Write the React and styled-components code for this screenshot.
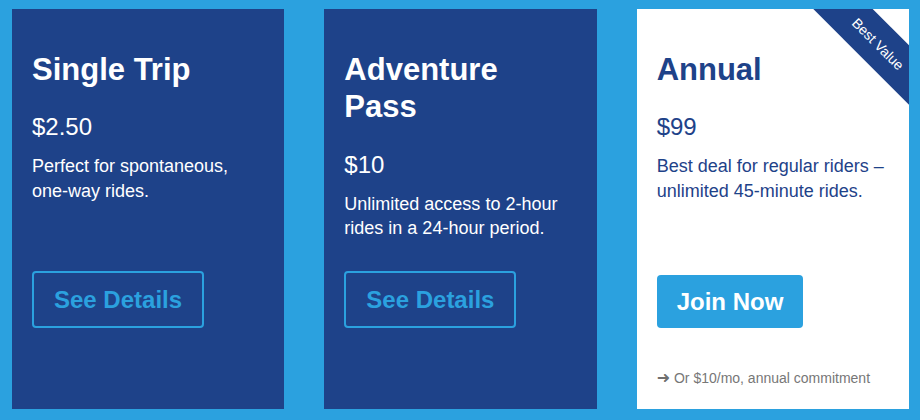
import React from "react";
import styled, { createGlobalStyle, css } from "styled-components";

const NAVY = "#1e4289";
const SKY = "#2ba1df";

const GlobalStyle = createGlobalStyle`
  html, body {
    margin: 0;
    padding: 0;
    background: ${SKY};
  }
  body {
    font-family: "Liberation Sans", Arial, sans-serif;
  }
`;

const Page = styled.div`
  display: grid;
  grid-template-columns: repeat(3, 1fr);
  gap: 40px;
  padding: 9px 11px 11px 12px;
  box-sizing: border-box;
  width: 920px;
  height: 420px;
`;

const Card = styled.article`
  position: relative;
  overflow: hidden;
  display: flex;
  flex-direction: column;
  box-sizing: border-box;
  height: 400px;
  padding: 20px;
  background: ${(p) => (p.$featured ? "#ffffff" : NAVY)};
  color: ${(p) => (p.$featured ? NAVY : "#ffffff")};
`;

const Title = styled.h2`
  margin: 22px 0 0;
  font-size: 31px;
  line-height: 37.4px;
  font-weight: 700;
`;

const Price = styled.p`
  margin: 25px 0 0;
  font-size: 24px;
  line-height: 28.8px;
`;

const Description = styled.p`
  margin: 12px 0 0;
  font-size: 18px;
  line-height: 24.3px;
`;

const Spacer = styled.div`
  flex: 1;
`;

const ActionButton = styled.button`
  align-self: flex-start;
  font-family: inherit;
  font-size: 24px;
  font-weight: 700;
  line-height: 29px;
  padding: 12px 20px;
  border-radius: 4px;
  cursor: pointer;
  ${(p) =>
    p.$variant === "solid"
      ? css`
          background: ${SKY};
          color: #ffffff;
          border: 0;
        `
      : css`
          background: transparent;
          color: ${SKY};
          border: 2px solid ${SKY};
        `}
`;

const Footer = styled.div`
  height: 61px;
  display: flex;
  align-items: flex-end;
`;

const Note = styled.p`
  margin: 0;
  font-size: 14px;
  line-height: 22px;
  color: #777777;
`;

const Arrow = styled.span`
  font-family: "DejaVu Sans", sans-serif;
  font-size: 16px;
  line-height: 1;
  color: #6f6f6f;
`;

const Ribbon = styled.div`
  position: absolute;
  top: 14px;
  right: -44px;
  width: 150px;
  height: 42px;
  line-height: 42px;
  background: ${NAVY};
  color: #ffffff;
  font-size: 14px;
  text-align: center;
  transform: rotate(45deg);
`;

const plans = [
  {
    title: "Single Trip",
    price: "$2.50",
    desc: "Perfect for spontaneous, one-way rides.",
    cta: "See Details",
  },
  {
    title: "Adventure Pass",
    price: "$10",
    desc: "Unlimited access to 2-hour rides in a 24-hour period.",
    cta: "See Details",
  },
  {
    title: "Annual",
    price: "$99",
    desc: "Best deal for regular riders – unlimited 45-minute rides.",
    cta: "Join Now",
    featured: true,
    note: "Or $10/mo, annual commitment",
    ribbon: "Best Value",
  },
];

export default function App() {
  return (
    <>
      <GlobalStyle />
      <Page>
        {plans.map((p) => (
          <Card key={p.title} $featured={p.featured}>
            {p.ribbon && <Ribbon>{p.ribbon}</Ribbon>}
            <Title>{p.title}</Title>
            <Price>{p.price}</Price>
            <Description>{p.desc}</Description>
            <Spacer />
            <ActionButton $variant={p.featured ? "solid" : "outline"}>
              {p.cta}
            </ActionButton>
            <Footer>
              {p.note && (
                <Note>
                  <Arrow>➜</Arrow> {p.note}
                </Note>
              )}
            </Footer>
          </Card>
        ))}
      </Page>
    </>
  );
}
